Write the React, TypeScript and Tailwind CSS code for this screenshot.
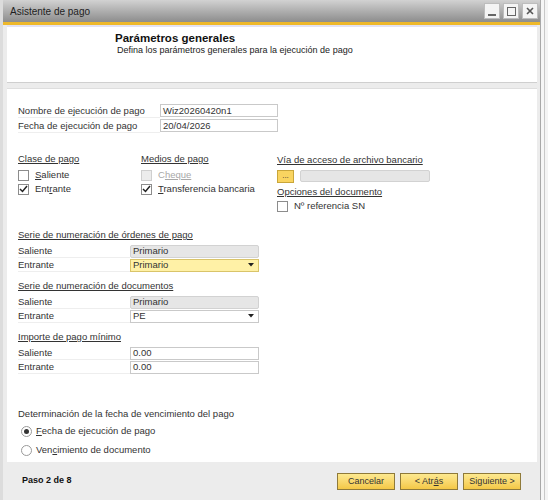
import React from 'react';

/**
 * Asistente de pago – paso 2 (Parámetros generales)
 */

function Check({ checked = false, disabled = false }: { checked?: boolean; disabled?: boolean }) {
  return (
    <span
      className={`w-[11px] h-[11px] flex items-center justify-center border shrink-0 ${
        disabled ? 'border-[#cfcfcf] bg-[#ececec]' : 'border-[#8c8c8c] bg-white'
      }`}
    >
      {checked && (
        <svg width="9" height="8" viewBox="0 0 9 8">
          <path d="M1 4 L3.5 6.5 L8 1" fill="none" stroke="#222" strokeWidth="1.5" />
        </svg>
      )}
    </span>
  );
}

function Radio({ checked = false }: { checked?: boolean }) {
  return (
    <span className="w-[11px] h-[11px] rounded-full border border-[#9a9a9a] bg-white flex items-center justify-center shrink-0">
      {checked && <span className="w-[5px] h-[5px] rounded-full bg-[#333]" />}
    </span>
  );
}

function Arrow() {
  return (
    <svg width="6" height="4" viewBox="0 0 6 4" className="mr-[4px]">
      <path d="M0 0 L6 0 L3 3.5 Z" fill="#222" />
    </svg>
  );
}

function Field({
  value,
  kind = 'white',
  dropdown = false,
  width = 'w-[129px]',
}: {
  value: string;
  kind?: 'white' | 'gray' | 'yellow';
  dropdown?: boolean;
  width?: string;
}) {
  const look =
    kind === 'gray'
      ? 'bg-[#e6e6e6] border-[#d2d2d2] rounded-[2px]'
      : kind === 'yellow'
        ? 'bg-[#fff1a6] border-[#d9c46a]'
        : 'bg-white border-[#c9c9c9]';
  return (
    <div className={`${width} h-[13px] border ${look} flex items-center justify-between pl-[2px]`}>
      <span className="leading-none">{value}</span>
      {dropdown && <Arrow />}
    </div>
  );
}

function Row({ label, children }: { label: string; children: React.ReactNode }) {
  return (
    <div className="flex items-center h-[14px]">
      <span className="w-[112px] border-b border-[#eeeeee] leading-[13px]">{label}</span>
      {children}
    </div>
  );
}

function Group({ title, rows }: { title: string; rows: React.ReactNode }) {
  return (
    <div>
      <div className="h-[13px] leading-[13px] underline mb-[3px]">{title}</div>
      {rows}
    </div>
  );
}

function WinButton({ children }: { children: React.ReactNode }) {
  return (
    <span className="w-[16px] h-[16px] bg-[#f4f4f4] border border-[#bdbdbd] flex items-center justify-center">
      {children}
    </span>
  );
}

function Btn({ children }: { children: React.ReactNode }) {
  return (
    <button className="w-[58px] h-[17px] border border-[#8f7a3a] bg-gradient-to-b from-[#fde98f] to-[#f4c845] text-[9px] text-[#333] leading-none">
      {children}
    </button>
  );
}

export default function App() {
  return (
    <div className="w-[548px] h-[500px] bg-[#f6f6f6] flex font-['Liberation_Sans',Arial,sans-serif] text-[9.5px] text-[#333] overflow-hidden">
      <div className="w-[541px] h-full flex flex-col border-l-[3px] border-l-[#dcdcdc] border-r border-r-[#a8a8a8]">
        {/* Title bar */}
        <div className="h-[22px] bg-gradient-to-b from-[#d2d2d2] to-[#8d8d8d] flex items-center justify-between pl-[7px] pr-[2px]">
          <span className="text-[10px] text-[#1e1e1e]">Asistente de pago</span>
          <div className="flex gap-[3px]">
            <WinButton>
              <span className="w-[8px] h-[2px] bg-[#666] mt-[8px]" />
            </WinButton>
            <WinButton>
              <span className="w-[9px] h-[9px] border border-[#666]" />
            </WinButton>
            <WinButton>
              <svg width="8" height="8" viewBox="0 0 8 8">
                <path d="M1 1 L7 7 M7 1 L1 7" stroke="#555" strokeWidth="1.6" />
              </svg>
            </WinButton>
          </div>
        </div>
        <div className="h-[3px] bg-[#eeb82a]" />

        <div className="flex-1 flex flex-col bg-[#ececec] pl-[4px] pr-[3px]">
          {/* Header panel */}
          <div className="h-[58px] bg-white border-t-2 border-t-[#e3e2f2] border-b border-b-[#cfcfcf] pl-[108px] pt-[4px]">
            <div className="text-[11.5px] font-bold text-[#111] leading-[14px]">Parámetros generales</div>
            <div className="text-[9px] text-[#222] pl-[2px] leading-[11px]">
              Defina los parámetros generales para la ejecución de pago
            </div>
          </div>

          {/* Main panel */}
          <div className="mt-[5px] h-[374px] bg-white border-t border-t-[#dedede] pl-[11px] pt-[14px]">
            <div className="flex items-center h-[15px]">
              <span className="w-[142px] border-b border-[#eeeeee] leading-[13px]">Nombre de ejecución de pago</span>
              <Field value="Wiz20260420n1" width="w-[118px]" />
            </div>
            <div className="flex items-center h-[15px]">
              <span className="w-[142px] border-b border-[#eeeeee] leading-[13px]">Fecha de ejecución de pago</span>
              <Field value="20/04/2026" width="w-[118px]" />
            </div>

            <div className="flex mt-[19px]">
              <div className="w-[123px]">
                <div className="h-[13px] leading-[13px] underline mb-[3px]">Clase de pago</div>
                <div className="flex items-center gap-[6px] h-[14px]">
                  <Check />
                  <span>
                    <span className="underline">S</span>aliente
                  </span>
                </div>
                <div className="flex items-center gap-[6px] h-[14px]">
                  <Check checked />
                  <span>
                    Ent<span className="underline">r</span>ante
                  </span>
                </div>
              </div>
              <div className="w-[136px]">
                <div className="h-[13px] leading-[13px] underline mb-[3px]">Medios de pago</div>
                <div className="flex items-center gap-[6px] h-[14px] text-[#a8a8a8]">
                  <Check disabled />
                  <span>
                    C<span className="underline">heque</span>
                  </span>
                </div>
                <div className="flex items-center gap-[6px] h-[14px]">
                  <Check checked />
                  <span>
                    <span className="underline">T</span>ransferencia bancaria
                  </span>
                </div>
              </div>
              <div className="pt-[1px]">
                <div className="h-[13px] leading-[13px] underline">Vía de acceso de archivo bancario</div>
                <div className="flex items-center gap-[6px] mt-[3px] h-[14px]">
                  <span className="w-[17px] h-[13px] border border-[#c9a63a] bg-[#f9d460] flex items-center justify-center text-[8px] leading-none">
                    ...
                  </span>
                  <span className="w-[130px] h-[12px] bg-[#e6e6e6] border border-[#d2d2d2] rounded-[2px]" />
                </div>
                <div className="h-[13px] leading-[13px] underline mt-[2px]">Opciones del documento</div>
                <div className="flex items-center gap-[6px] h-[15px] mt-[1px]">
                  <Check />
                  <span>Nº referencia SN</span>
                </div>
              </div>
            </div>

            <div className="mt-[14px] flex flex-col gap-[7px]">
              <Group
                title="Serie de numeración de órdenes de pago"
                rows={
                  <>
                    <Row label="Saliente">
                      <Field value="Primario" kind="gray" />
                    </Row>
                    <Row label="Entrante">
                      <Field value="Primario" kind="yellow" dropdown />
                    </Row>
                  </>
                }
              />
              <Group
                title="Serie de numeración de documentos"
                rows={
                  <>
                    <Row label="Saliente">
                      <Field value="Primario" kind="gray" />
                    </Row>
                    <Row label="Entrante">
                      <Field value="PE" dropdown />
                    </Row>
                  </>
                }
              />
              <Group
                title="Importe de pago mínimo"
                rows={
                  <>
                    <Row label="Saliente">
                      <Field value="0.00" />
                    </Row>
                    <Row label="Entrante">
                      <Field value="0.00" />
                    </Row>
                  </>
                }
              />
            </div>

            <div className="mt-[33px] h-[13px] leading-[13px]">Determinación de la fecha de vencimiento del pago</div>
            <div className="flex items-center gap-[4px] pl-[3px] mt-[5px] h-[13px]">
              <Radio checked />
              <span>
                <span className="underline">F</span>echa de ejecución de pago
              </span>
            </div>
            <div className="flex items-center gap-[4px] pl-[3px] mt-[6px] h-[13px]">
              <Radio />
              <span>
                Ven<span className="underline">c</span>imiento de documento
              </span>
            </div>
          </div>

          {/* Footer */}
          <div className="flex-1 flex items-center justify-between pl-[15px] pr-[16px]">
            <span className="text-[9px] font-bold text-[#111]">Paso 2 de 8</span>
            <div className="flex gap-[5px]">
              <Btn>Cancelar</Btn>
              <Btn>
                &lt; Atr<span className="underline">á</span>s
              </Btn>
              <Btn>
                Si<span className="underline">g</span>uiente &gt;
              </Btn>
            </div>
          </div>
        </div>
      </div>
      <div className="flex-1 ml-[3px] border-l border-l-[#c8c8c8] bg-[#f4f4f4]" />
    </div>
  );
}
